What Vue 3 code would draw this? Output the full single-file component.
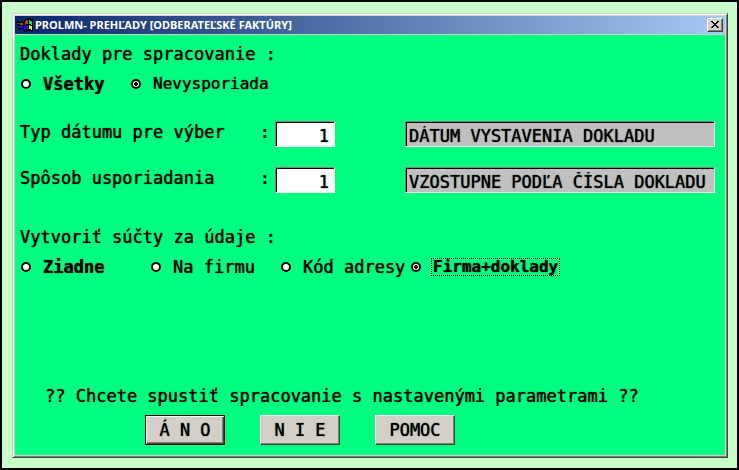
<script setup>
import { ref } from 'vue'

const documents = ref('open')
const totals = ref('company-docs')
const dateType = ref('1')
const sortType = ref('1')
const dateText = ref('DÁTUM VYSTAVENIA DOKLADU')
const sortText = ref('VZOSTUPNE PODĽA ČÍSLA DOKLADU')

const documentOptions = [
  { id: 'all', label: 'Všetky', strong: true },
  { id: 'open', label: 'Nevysporiada', long: true },
]
const totalOptions = [
  { id: 'none', label: 'Ziadne', strong: true },
  { id: 'company', label: 'Na firmu' },
  { id: 'address', label: 'Kód adresy' },
  { id: 'company-docs', label: 'Firma+doklady', strong: true, outlined: true, long: true },
]
</script>

<template>
  <div class="desktop">
    <main class="window">
      <header class="titlebar">
        <svg class="app-icon" viewBox="0 0 16 16" aria-hidden="true" shape-rendering="crispEdges">
          <path fill="#000" d="M9 2h1V1h4v1h2v13h-2v-1h-4v1H7v-2H6V4h1V3h2zM0 4h2v1h4v1H0zM0 7h6v2H0zM1 11h5v2H2v-1H1z" />
          <path fill="#b04830" d="M9 3h2v4H9v1H8V4h1zM1 6h1v1H1zM3 6h3v2H3z" />
          <path fill="#20e020" d="M12 3h1v1h2v4h-1V7h-2z" />
          <path fill="#1010e0" d="M9 8h2v4H9v1H7V9h2zM1 10h1v1H1zM3 9h3v2H3zM4 12h2v1H4z" />
          <path fill="#f0e820" d="M12 8h1v1h2v4h-1v-1h-2z" />
        </svg>
        <h1>PROLMN- PREHĽADY [ODBERATEĽSKÉ FAKTÚRY]</h1>
        <button class="close" type="button" aria-label="Zavrieť">
          <svg viewBox="0 0 8 7" shape-rendering="crispEdges">
            <path d="M0 0h2v1h1v1h2V1h1V0h2v1H7v1H6v1H5v1h1v1h1v1h1v1H6V6H5V5H3v1H2v1H0V6h1V5h1V4h1V3H2V2H1V1H0z" />
          </svg>
        </button>
      </header>

      <form class="client" @submit.prevent>
        <fieldset class="documents">
          <legend>Doklady pre spracovanie :</legend>
          <div class="options">
            <label v-for="o in documentOptions" :key="o.id" class="option">
              <input v-model="documents" type="radio" name="documents" :value="o.id" />
              <span class="caption" :class="{ strong: o.strong, long: o.long }">{{ o.label }}</span>
            </label>
          </div>
        </fieldset>

        <div class="fields">
          <label class="name" for="date-type"><span>Typ dátumu pre výber</span><span>:</span></label>
          <input id="date-type" v-model="dateType" class="box code" type="text" />
          <input v-model="dateText" class="box info" type="text" readonly aria-label="Typ dátumu" />
          <label class="name" for="sort-type"><span>Spôsob usporiadania</span><span>:</span></label>
          <input id="sort-type" v-model="sortType" class="box code" type="text" />
          <input v-model="sortText" class="box info" type="text" readonly aria-label="Usporiadanie" />
        </div>

        <fieldset class="totals">
          <legend>Vytvoriť súčty za údaje :</legend>
          <div class="options">
            <label v-for="o in totalOptions" :key="o.id" class="option">
              <input v-model="totals" type="radio" name="totals" :value="o.id" />
              <span class="caption" :class="{ strong: o.strong, outlined: o.outlined, long: o.long }">{{ o.label }}</span>
            </label>
          </div>
        </fieldset>

        <footer class="confirm">
          <p>?? Chcete spustiť spracovanie s nastavenými parametrami ??</p>
          <div class="buttons">
            <button class="push default" type="submit">Á N O</button>
            <button class="push" type="button">N I E</button>
            <button class="push" type="button">POMOC</button>
          </div>
        </footer>
      </form>
    </main>
  </div>
</template>

<style>
body {
  margin: 0;
}
</style>

<style scoped>
* {
  box-sizing: border-box;
}

.desktop {
  display: flex;
  min-height: 100vh;
  padding: 11px 9px 10px 10px;
  border: 2px solid #000;
  background: #c8ffc8;
}

.window {
  display: flex;
  flex: 1;
  flex-direction: column;
  padding: 1px;
  border: 1px solid;
  border-color: #d4d0c8 #404040 #404040 #d4d0c8;
  background: #d4d0c8;
  box-shadow: inset 1px 1px #fff, inset -1px -1px #808080;
}

.titlebar {
  display: flex;
  align-items: center;
  height: 18px;
  margin: 1px;
  padding: 0 2px;
  background: linear-gradient(to right, #0a246a, #a6caf0);
}

.app-icon {
  width: 16px;
  height: 16px;
}

h1 {
  flex: 1;
  margin: 0 0 0 2px;
  color: #fff;
  font: bold 11px/18px "Noto Sans", sans-serif;
  white-space: nowrap;
}

.close {
  display: flex;
  align-items: center;
  justify-content: center;
  width: 16px;
  height: 14px;
  padding: 0 1px 1px 0;
  border: 1px solid;
  border-color: #fff #404040 #404040 #fff;
  background: #d4d0c8;
  box-shadow: inset -1px -1px #808080;
}

.close svg {
  width: 8px;
  height: 7px;
}

.client {
  display: flex;
  flex: 1;
  flex-direction: column;
  margin: 0 1px 1px;
  padding: 9px 10px 10px 5px;
  background: #00ff80;
  color: #000;
  font: 17px/20px "DejaVu Sans Mono", monospace;
  text-shadow: 0 0 1px #000;
}

fieldset {
  min-width: 0;
  margin: 0;
  padding: 0;
  border: 0;
}

legend {
  padding: 0;
}

.options {
  display: grid;
  padding: 10px 0 0 1px;
}

.documents .options {
  grid-template-columns: 110px 139px;
}

.totals .options {
  grid-template-columns: 130px 130px 130px 149px;
}

.option {
  display: flex;
  align-items: center;
  gap: 10px;
  height: 20px;
}

.option input {
  flex: none;
  width: 10px;
  height: 10px;
  margin: 0;
  appearance: none;
  border: 2px solid #000;
  border-radius: 50%;
  background: #fff;
}

.option input:checked {
  background: radial-gradient(circle, #000 0 2px, #fff 2px);
}

.caption {
  min-width: 0;
  height: 18px;
  padding-left: 2px;
  line-height: 18px;
  white-space: nowrap;
}

.strong {
  font-weight: bold;
}

.long {
  flex: 1;
  overflow: hidden;
  font-size: 16px;
}

.outlined {
  outline: 1px dotted #000;
  outline-offset: -1px;
}

.fields {
  display: grid;
  grid-template-columns: 255px 60px 1fr;
  row-gap: 20px;
  margin-top: 27px;
}

.name {
  display: flex;
  justify-content: space-between;
  padding: 1px 5px 0 0;
}

.box {
  min-width: 0;
  height: 26px;
  padding: 3px 3px 0;
  border: 1px solid;
  border-color: #808080 #fff #fff #808080;
  border-radius: 0;
  outline: 0;
  box-shadow: inset 1px 1px #000;
  color: #000;
  font: inherit;
  text-shadow: inherit;
}

.code {
  padding-right: 5px;
  background: #fff;
  text-align: right;
}

.info {
  margin-left: 70px;
  background: #c0c0c0;
}

.totals {
  margin-top: 34px;
}

.confirm {
  margin-top: auto;
}

.confirm p {
  margin: 0 0 9px 25px;
}

.buttons {
  display: flex;
  gap: 35px;
  margin-left: 125px;
}

.push {
  width: 80px;
  height: 30px;
  padding: 0;
  border: 1px solid;
  border-color: #fff #404040 #404040 #fff;
  background: #d4d0c8;
  box-shadow: inset -1px -1px #808080;
  color: #000;
  font: inherit;
  text-shadow: inherit;
}

.default {
  border-color: #000;
  box-shadow: inset 1px 1px #fff, inset -1px -1px #404040, inset -2px -2px #808080;
}
</style>
